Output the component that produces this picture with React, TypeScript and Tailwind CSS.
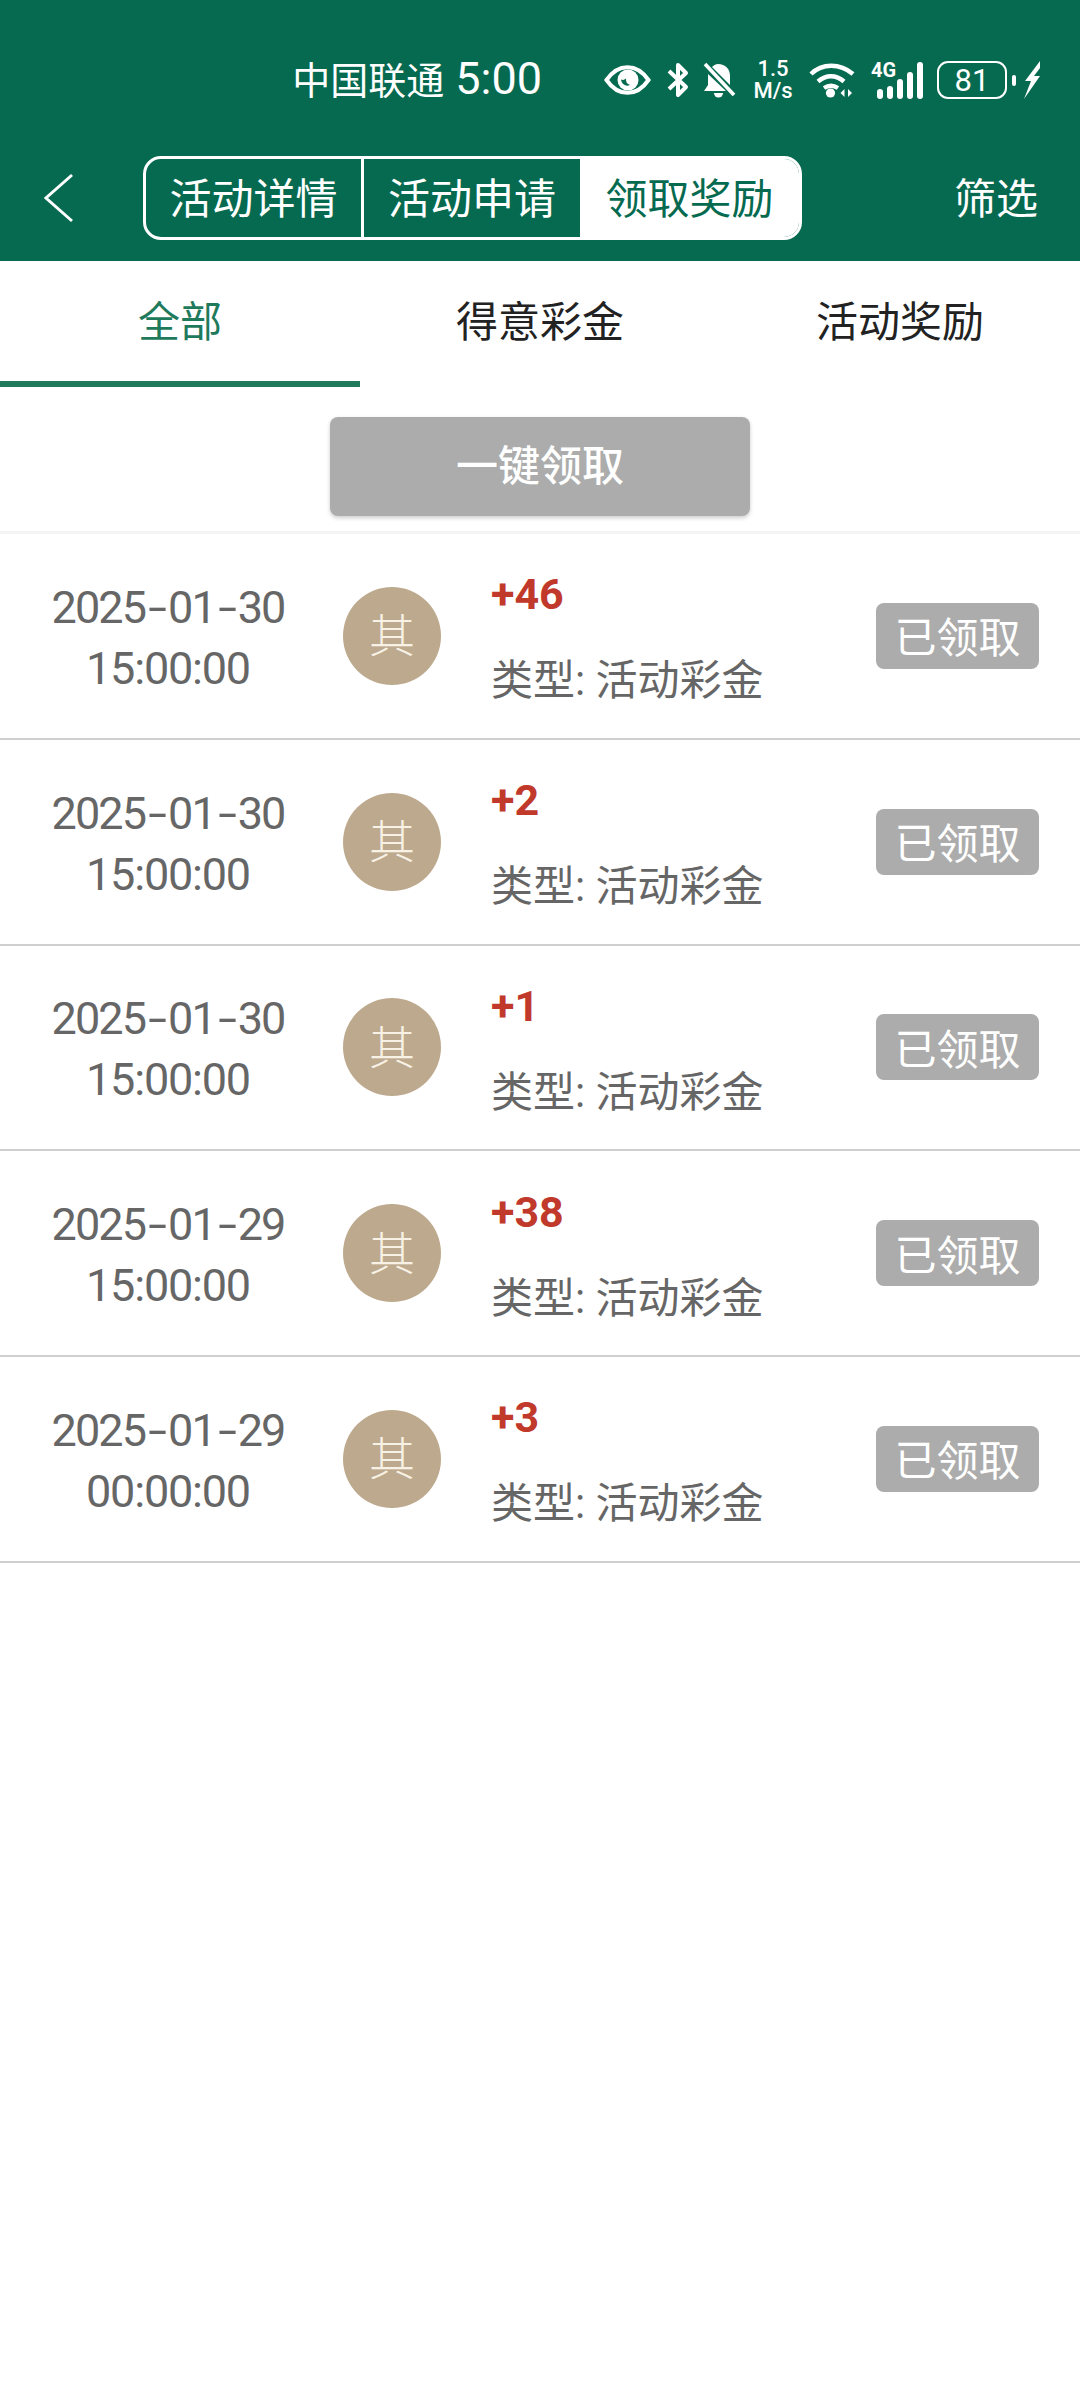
const font = { fontFamily: 'Roboto, "Noto Sans CJK SC", sans-serif' }

const records = [
  { date: ['2025', '01', '30'], time: '15:00:00', amount: '+46' },
  { date: ['2025', '01', '30'], time: '15:00:00', amount: '+2' },
  { date: ['2025', '01', '30'], time: '15:00:00', amount: '+1' },
  { date: ['2025', '01', '29'], time: '15:00:00', amount: '+38' },
  { date: ['2025', '01', '29'], time: '00:00:00', amount: '+3' },
]

function StatusIcons() {
  return (
    <div className="flex items-center text-white">
      {/* eye */}
      <svg width="47" height="30" viewBox="0 0 47 30">
        <path d="M2.5 15C9 5.5 15.5 2.2 23.5 2.2S38 5.500 44.5 15C38 24.5 31.5 27.8 23.5 27.8S9 24.5 2.5 15Z" fill="none" stroke="#fff" strokeWidth="4" />
        <circle cx="24" cy="15" r="10.5" fill="#fff" />
        <path d="M17 14.5c2 .8 3.5 .4 5-1-.3 3.5 1 5.5 4 6.5-4 2-8.5-1-9-5.5Z" fill="#066a50" />
      </svg>
      {/* bluetooth, muted */}
      <svg width="22" height="36" viewBox="0 0 22 36" className="ml-[16px]">
        <path d="M11 15V3l8 8L2 27M2 9l17 16-8 8V21" fill="none" stroke="#fff" strokeWidth="4" strokeLinejoin="round" />
      </svg>
      {/* bell off */}
      <svg width="35" height="36" viewBox="0 0 33 36" className="ml-[13px]">
        <path d="M15 2c7.5 0 12 5 12 12v9L9 5c2-2 4-3 6-3Z" fill="#fff" />
        <path d="M5 12 23 29H1l4-6Z" fill="#fff" />
        <path d="M11 31h9a4.5 4.5 0 0 1-9 0Z" fill="#fff" />
        <path d="M2 2 31 33" stroke="#fff" strokeWidth="3.6" />
      </svg>
      <div className="ml-[15px] flex w-[42px] flex-col items-center text-[22px] font-medium leading-[22px] text-white">
        <span>1.5</span>
        <span>M/s</span>
      </div>
      {/* wifi */}
      <svg width="46" height="36" viewBox="0 0 46 36" className="ml-[15px]">
        <path d="M2 12C13 1 31 1 44 12M9 19.5c8-7 18-7 26 0M15 26c4.5-2.8 9.5-2.8 14 0" fill="none" stroke="#fff" strokeWidth="4.4" />
        <circle cx="21.5" cy="31" r="4.6" fill="#fff" />
        <path d="M31.5 31l4-4v8ZM43 31l-4-4v8Z" fill="#fff" />
      </svg>
      {/* cell signal */}
      <div className="relative ml-[16px] h-[37px] w-[52px]">
        <span className="absolute left-0 top-[-1px] text-[20px] font-bold leading-[18px] text-white">4G</span>
        <div className="absolute bottom-0 right-0 flex items-end gap-[4px]">
          <span className="h-[10px] w-[6px] rounded-full bg-white" />
          <span className="h-[13px] w-[6px] rounded-full bg-white" />
          <span className="h-[20px] w-[6px] rounded-full bg-white" />
          <span className="h-[27px] w-[6px] rounded-full bg-white" />
          <span className="h-[37px] w-[6px] rounded-full bg-white" />
        </div>
      </div>
      {/* battery */}
      <div className="ml-[14px] flex h-[38px] w-[70px] items-center justify-center rounded-[11px] border-[2.5px] border-white text-[31px] leading-none">
        81
      </div>
      <span className="ml-[5px] h-[11px] w-[4px] rounded-full bg-white" />
      <svg width="20" height="38" viewBox="0 0 18 38" className="ml-[6px]">
        <path d="M17 0 2 20h6L1 38 17 15h-6l6-8Z" fill="#fff" />
      </svg>
    </div>
  )
}

export default function App() {
  return (
    <div className="min-h-[2400px] bg-white" style={font}>
      <header className="h-[261px] bg-[#066a50]">
        <div className="flex h-[156px] items-center justify-end pr-[38px] pt-[4px]">
          <div className="mr-[62px] flex items-baseline gap-[11px] leading-[50px] text-white">
            <span className="text-[38px]">中国联通</span>
            <span className="text-[45px]">5:00</span>
          </div>
          <StatusIcons />
        </div>
        <div className="flex h-[84px] items-center justify-between pl-[44px] pr-[42px]">
          <svg width="30" height="50" viewBox="0 0 30 50">
            <path d="M28 2 2 25l26 23" fill="none" stroke="#fff" strokeWidth="3" />
          </svg>
          <div className="ml-[69px] mr-auto flex h-[84px] w-[659px] rounded-[18px] border-[3px] border-white text-[42px] text-white">
            <span className="flex w-[218px] items-center justify-center border-r-[3px] border-white pt-[2px]">活动详情</span>
            <span className="flex w-[216px] items-center justify-center pt-[2px]">活动申请</span>
            <span className="flex flex-1 items-center justify-center rounded-r-[15px] bg-white pt-[2px] text-[#066a50]">领取奖励</span>
          </div>
          <span className="pt-[2px] text-[42px] text-white">筛选</span>
        </div>
      </header>

      <nav className="grid h-[126px] grid-cols-3 text-[42px] text-[#222]">
        <div className="flex items-center justify-center border-b-[6px] border-[#1f7a5c] pt-[2px] text-[#1f7a5c]">全部</div>
        <div className="flex items-center justify-center pb-[4px]">得意彩金</div>
        <div className="flex items-center justify-center pb-[4px]">活动奖励</div>
      </nav>

      <div className="flex h-[147px] justify-center border-b-[3px] border-[#f4f4f4] pt-[30px]">
        <button className="h-[99px] w-[420px] rounded-[8px] bg-[#acacac] text-[42px] font-medium text-white shadow-[0_2px_4px_rgba(0,0,0,0.2)]">
          一键领取
        </button>
      </div>

      <ul>
        {records.map((r, i) => (
          <li key={i} className="flex h-[205.75px] items-center border-b-2 border-[#cfcfcf]">
            <div className="ml-[18px] w-[300px] pt-[4px] text-center text-[45px] leading-[61px] text-[#666]">
              <div className="tracking-[-1.8px]">
                {r.date[0]}
                <span className="mx-[6px] inline-block scale-x-150">-</span>
                {r.date[1]}
                <span className="mx-[6px] inline-block scale-x-150">-</span>
                {r.date[2]}
              </div>
              <div className="tracking-[-1.2px]">{r.time}</div>
            </div>
            <div className="ml-[25px] flex h-[98px] w-[98px] items-center justify-center rounded-full bg-[#bda98d] pt-[2px] text-[46px] font-light text-[#f8f2e6]">
              其
            </div>
            <div className="ml-[50px] flex-1 pt-[4px]">
              <div className="text-[43px] font-bold leading-[50px] text-[#c0392b]">{r.amount}</div>
              <div className="mt-[37px] text-[42px] leading-[50px] text-[#666]">类型: 活动彩金</div>
            </div>
            <span className="mr-[41px] flex h-[66px] w-[163px] items-center justify-center rounded-[8px] bg-[#acacac] pt-[6px] text-[42px] text-white">
              已领取
            </span>
          </li>
        ))}
      </ul>
    </div>
  )
}
